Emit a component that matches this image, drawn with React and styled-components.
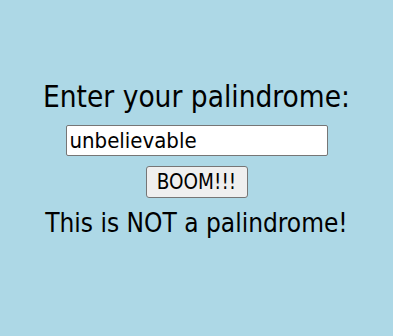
import React, { useState } from "react";
import styled, { createGlobalStyle } from "styled-components";

const GlobalStyle = createGlobalStyle`
  html, body {
    margin: 0;
    padding: 0;
    background: #add8e6;
  }
  body {
    font-family: "DejaVu Sans Condensed", "DejaVu Sans", sans-serif;
    color: #000000;
  }
`;

const Page = styled.div`
  display: flex;
  flex-direction: column;
  align-items: center;
  padding-top: 80px;
  height: 336px;
  box-sizing: border-box;
`;

const Title = styled.h1`
  margin: 0;
  font-size: 29.5px;
  font-weight: 400;
  line-height: 34px;
`;

const Input = styled.input`
  margin-top: 11px;
  width: 262px;
  height: 31px;
  box-sizing: border-box;
  padding: 0 3px;
  font-family: inherit;
  font-size: 22px;
  color: #000000;
  background: #ffffff;
  border: 1px solid #767676;
  border-radius: 2px;
  outline: none;
`;

const Button = styled.button`
  margin-top: 10px;
  width: 102px;
  height: 32px;
  box-sizing: border-box;
  font-family: inherit;
  font-size: 20.5px;
  color: #000000;
  background: #efefef;
  border: 1px solid #767676;
  border-radius: 3px;
  padding: 0 4px;
`;

const Result = styled.p`
  margin: 10px 0 0;
  font-size: 26px;
  line-height: 31px;
`;

const isPalindrome = (s) => {
  const clean = s.toLowerCase().replace(/[^a-z0-9]/g, "");
  return clean === clean.split("").reverse().join("");
};

export default function App() {
  const [value, setValue] = useState("unbelievable");
  const [checked, setChecked] = useState("unbelievable");

  return (
    <>
      <GlobalStyle />
      <Page>
        <Title>Enter your palindrome:</Title>
        <Input value={value} onChange={(e) => setValue(e.target.value)} />
        <Button onClick={() => setChecked(value)}>BOOM!!!</Button>
        <Result>
          {isPalindrome(checked)
            ? "This is a palindrome!"
            : "This is NOT a palindrome!"}
        </Result>
      </Page>
    </>
  );
}
